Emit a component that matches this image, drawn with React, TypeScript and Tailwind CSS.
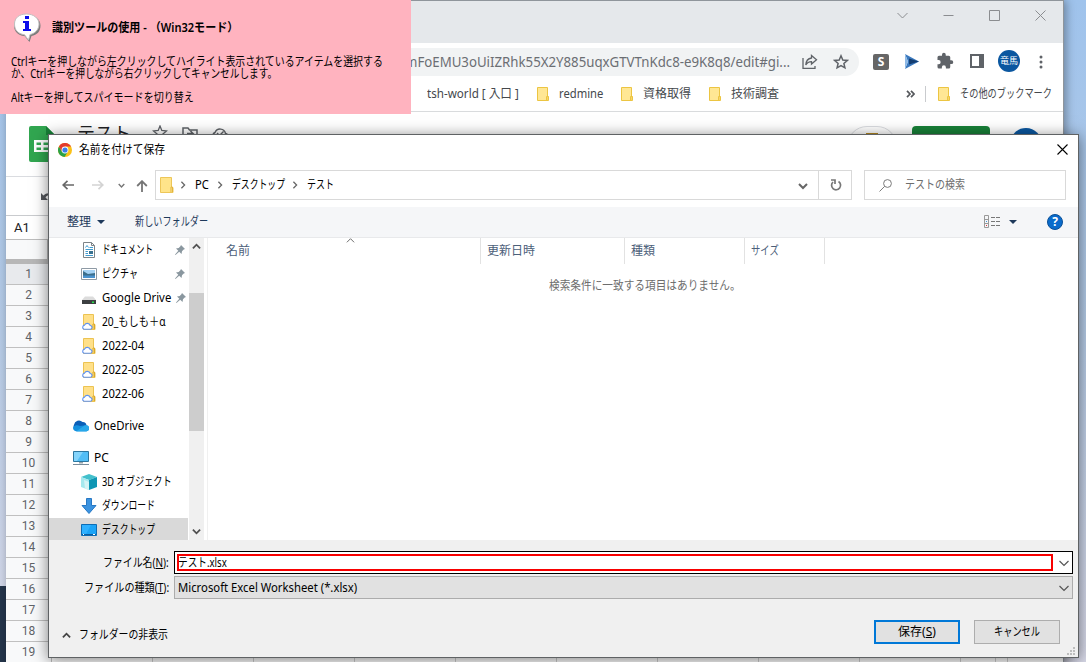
import React, { useLayoutEffect, useRef, useState } from 'react';

const ROWS = Array.from({ length: 19 }, (_, i) => i + 1);
const SHEET_COLUMNS = [101, 101, 101, 101, 101, 101, 101, 101, 101, 35, 12];

const Label: React.FC<{ w: number; className?: string; children: React.ReactNode }> = ({ w, className = '', children }) => {
  const ref = useRef<HTMLSpanElement>(null);
  const [scale, setScale] = useState(1);

  useLayoutEffect(() => {
    if (ref.current) setScale(w / ref.current.offsetWidth);
  }, [w]);

  return (
    <span className={`block shrink-0 whitespace-nowrap ${className}`} style={{ width: w }}>
      <span ref={ref} className="inline-block origin-left" style={{ transform: `scaleX(${scale})` }}>{children}</span>
    </span>
  );
};

const Chevron: React.FC<{ className: string; d?: string; sw?: number }> = ({ className, d = 'M1 3l4 4 4-4', sw = 1.5 }) => (
  <svg viewBox="0 0 10 10" className={`shrink-0 ${className}`} fill="none" stroke="currentColor" strokeWidth={sw}><path d={d} /></svg>
);

const BookmarkFolder: React.FC = () => (
  <svg viewBox="0 0 12 14" className="w-3 h-3.5 shrink-0">
    <path d="M.5.5h10v9h1v4H.5z" fill="#ffe794" stroke="#ecc542" />
    <path d="M9.500 13V9.500h1.500V13" fill="#ffe794" stroke="#ecc542" />
  </svg>
);

const FolderIcon: React.FC = () => (
  <svg viewBox="0 0 14 16" className="w-3.5 h-4 shrink-0">
    <path d="M.5.500h11v10h1.500v5H.5z" fill="#ffe48a" stroke="#edc658" />
    <path d="M11 15v-5h1.500v5" fill="#ffe9a2" stroke="#e3b53c" />
  </svg>
);

const CloudFolder: React.FC = () => (
  <svg viewBox="0 0 16 16" className="w-4 h-4 shrink-0">
    <path d="M2.500.5h10v10h1.500v5H2.500z" fill="#ffe089" stroke="#ecc352" />
    <path d="M12 15v-5h1.500v5" fill="#ffe9a2" stroke="#dca928" />
    <path d="M3 15.300h6a1.900 1.900 0 0 0 .2-3.800 3 3 0 0 0-5.600-.4A2.200 2.200 0 0 0 3 15.300z" fill="#fff" stroke="#5f92ef" strokeWidth="1.100" />
  </svg>
);

const DocumentIcon = () => (
  <svg viewBox="0 0 16 16" className="w-4 h-4 shrink-0">
    <path d="M2.500.5h8l3 3v12h-11z" fill="#fff" stroke="#7d8488" />
    <path d="M10.500.5v3h3" fill="none" stroke="#7d8488" />
    <path d="M4.500 5.500l1.500-2 1.500 2M8.500 5.500H12M4.500 7.500H12M4.500 9.500h2.500M4.500 11.500h2.500M4.500 13.500H12" fill="none" stroke="#3f9bd0" />
    <path d="M8 9h4v3H8z" fill="#39718f" />
  </svg>
);

const PictureIcon = () => (
  <svg viewBox="0 0 16 16" className="w-4 h-4 shrink-0">
    <path d="M.5 2.500h15v11H.5z" fill="#fff" stroke="#8e9aa5" />
    <path d="M2 4h12v8H2z" fill="#a4d2f5" />
    <path d="M2 5l5 3 7-1v3H2z" fill="#3c6f8c" />
    <path d="M2 9.500h12V12H2z" fill="#4a93cf" />
  </svg>
);

const DriveIcon = () => (
  <svg viewBox="0 0 16 16" className="w-4 h-4 shrink-0">
    <path d="M4 6.500h8L15 10H1z" fill="#dcdcdc" />
    <path d="M1 10h14v4H1z" fill="#3c3f41" />
    <path d="M11 11.500h2V13h-2z" fill="#28e04a" />
  </svg>
);

const OneDriveIcon = () => (
  <svg viewBox="0 0 16 16" className="w-4 h-4 shrink-0">
    <path d="M4 12.500A4 4 0 0 1 1 6.700 5 5 0 0 1 9.500 4a3.800 3.800 0 0 1 4 3.500z" fill="#0a5fb8" />
    <path d="M3 13.200a3 3 0 0 1-2.700-4.100C2 6.500 5 7 7 8l6-.8a3 3 0 0 1 .300 6z" fill="#1490df" />
    <path d="M3 13.400L10.500 8.200a3 3 0 0 1 3-.9 3.100 3.100 0 0 1 0 6.100z" fill="#28a8ea" />
  </svg>
);

const PcIcon = () => (
  <svg viewBox="0 0 16 16" className="w-4 h-4 shrink-0">
    <path d="M.5 1.500h15v10H.5z" fill="#52bdf5" stroke="#2c769f" />
    <path d="M1 2h9L4 11H1z" fill="#84d4fb" />
    <path d="M6 12h4v1.500H6z" fill="#97a4ac" />
    <path d="M0 14.500h16" stroke="#788c9b" />
  </svg>
);

const CubeIcon = () => (
  <svg viewBox="0 0 16 16" className="w-4 h-4 shrink-0">
    <path d="M8 0l8 3-8 3-8-3z" fill="#43c0cc" />
    <path d="M0 3l8 3v10l-8-3z" fill="#a5e8ee" />
    <path d="M16 3L8 6v10l8-3z" fill="#0e96b4" />
    <path d="M3 6l5 2v8l-4-1.500z" fill="#d4f3f5" />
  </svg>
);

const DownloadIcon = () => (
  <svg viewBox="0 0 16 16" className="w-4 h-4 shrink-0">
    <path d="M5.500.5h5v7h4.500L8 15.500 1 7.500h4.500z" fill="#3b93e0" stroke="#2778c4" />
  </svg>
);

const DesktopIcon = () => (
  <svg viewBox="0 0 16 16" className="w-4 h-4 shrink-0">
    <path d="M.5 2.500h15v11H.5z" fill="#1ba4f7" stroke="#0d6db5" />
    <path d="M1 3h9L5 12H1z" fill="#2fb1ff" />
    <path d="M1 12.500h14" stroke="#0d5c9e" />
    <path d="M2 12.500h1M12 12.500h2" stroke="#fff" />
  </svg>
);

const PinIcon = () => (
  <svg viewBox="0 0 10 10" className="w-2.5 h-2.5" fill="#8a979f">
    <path d="M6 0l4 4-1.300.6L7 6.300 6.500 9 4.200 6.700 0.500 10 0 9.500 3.300 5.800 1 3.500l2.700-.5L5.400 1.300z" />
  </svg>
);

const ChromeIcon = () => (
  <svg viewBox="0 0 14 14" className="w-3.5 h-3.5">
    <circle cx="7" cy="7" r="7" fill="#fbc116" />
    <path d="M7 7L1 3.400A7 7 0 0 1 13.100 3.500H7z" fill="#e33b2e" />
    <path d="M1 3.400A7 7 0 0 0 6.500 14L9.800 8.800 4 8.800z" fill="#2aa147" />
    <path d="M1 3.400L4.300 9 7 4V2z" fill="#e33b2e" />
    <circle cx="7" cy="7" r="3.400" fill="#fff" />
    <circle cx="7" cy="7" r="2.600" fill="#3d7ee8" />
  </svg>
);

type NavItem = { label: string; w: number; icon: React.FC; pin?: boolean; root?: boolean; active?: boolean; gap?: boolean };

const NAV_ITEMS: NavItem[] = [
  { label: 'ドキュメント', w: 51, icon: DocumentIcon, pin: true },
  { label: 'ピクチャ', w: 36, icon: PictureIcon, pin: true },
  { label: 'Google Drive', w: 69, icon: DriveIcon, pin: true },
  { label: '20_もしも＋α', w: 64, icon: CloudFolder },
  { label: '2022-04', w: 42, icon: CloudFolder },
  { label: '2022-05', w: 42, icon: CloudFolder },
  { label: '2022-06', w: 42, icon: CloudFolder },
  { label: 'OneDrive', w: 50, icon: OneDriveIcon, root: true, gap: true },
  { label: 'PC', w: 15, icon: PcIcon, root: true, gap: true },
  { label: '3D オブジェクト', w: 70, icon: CubeIcon },
  { label: 'ダウンロード', w: 53, icon: DownloadIcon },
  { label: 'デスクトップ', w: 53, icon: DesktopIcon, active: true },
];

const COLUMNS = [
  { label: '名前', w: 24, box: 'w-[273px] pl-[18px]' },
  { label: '更新日時', w: 48, box: 'w-36 pl-1.5' },
  { label: '種類', w: 24, box: 'w-[120px] pl-1.5' },
  { label: 'サイズ', w: 28, box: 'w-20 pl-1.5' },
];

const BrowserWindow: React.FC = () => (
  <div className="absolute left-1.5 top-0 w-[1058px] h-[670px] bg-white border-t border-r border-[#8f959b] shadow-[2px_0_9px_rgba(0,0,0,0.35)] flex flex-col overflow-hidden">
    <div className="h-[42px] shrink-0 bg-[#e5e8eb] flex justify-end gap-[35px] pt-[9px] pr-[17px] text-[#8b8d90]">
      <svg viewBox="0 0 11 11" className="w-[11px] h-[11px]" fill="none" stroke="currentColor"><path d="M.5 3l5 5 5-5" /></svg>
      <svg viewBox="0 0 11 11" className="w-[11px] h-[11px]" fill="none" stroke="currentColor"><path d="M.5 5.500h10" /></svg>
      <svg viewBox="0 0 11 11" className="w-[11px] h-[11px]" fill="none" stroke="currentColor"><path d="M.5.5h10v10H.5z" /></svg>
      <svg viewBox="0 0 11 11" className="w-[11px] h-[11px]" fill="none" stroke="currentColor"><path d="M.5.5l10 10M10.500.5l-10 10" /></svg>
    </div>

    <div className="h-9 shrink-0 flex items-center pt-0.5 pr-3.5 text-[#5f6368]">
      <div className="w-[853px] h-7 rounded-r-full bg-[#f1f3f4] flex items-center pl-[399px]">
        <Label w={385} className="text-sm text-[#6b6e73]">mFoEMU3oUiIZRhk55X2Y885uqxGTVTnKdc8-e9K8q8/edit#gi...</Label>
        <svg viewBox="0 0 16 16" className="ml-3 w-4 h-4" fill="none" stroke="currentColor" strokeWidth="1.300">
          <path d="M1 4v10.300h12V12M9.500 1.500l5 4.300-5 4.200V7.600C6.500 7.600 5 8.800 3.800 11c.2-4 2.500-6.500 5.700-7z" />
        </svg>
        <svg viewBox="0 0 16 16" className="ml-[15px] w-4 h-4" fill="none" stroke="currentColor" strokeWidth="1.500">
          <path d="M8 1.800l1.800 4.200 4.500.4-3.400 3 1 4.400L8 11.500l-3.900 2.300 1-4.400-3.400-3 4.500-.4z" />
        </svg>
      </div>
      <div className="ml-3.5 w-4 h-4 rounded-[2px] bg-[#666] text-white text-xs font-bold leading-4 text-center">S</div>
      <svg viewBox="0 0 14 15" className="ml-4 -mt-0.5 w-3.5 h-[15px]">
        <path d="M0 0l14 7.500L0 15l3-7.500z" fill="#3a78bd" />
        <path d="M4 4.500l10 3-10 3z" fill="#143e72" />
        <path d="M0 0l3 7.500L0 15z" fill="#8db9e6" />
      </svg>
      <svg viewBox="0 0 24 24" className="ml-[17px] w-[18px] h-[18px] -mt-0.5" fill="currentColor">
        <path d="M20.500 11H19V7a2 2 0 0 0-2-2h-4V3.500a2.500 2.500 0 0 0-5 0V5H4a2 2 0 0 0-2 2v3.800h1.500a2.700 2.700 0 0 1 0 5.400H2V20a2 2 0 0 0 2 2h3.800v-1.500a2.700 2.700 0 0 1 5.400 0V22H17a2 2 0 0 0 2-2v-4h1.500a2.500 2.500 0 0 0 0-5z" />
      </svg>
      <svg viewBox="0 0 14 14" className="ml-4 -mt-0.5 w-3.5 h-3.5"><path d="M1 1h12v12H1z" fill="#fff" stroke="currentColor" strokeWidth="2" /><path d="M9 1h5v12H9z" fill="currentColor" /></svg>
      <div className="ml-3.5 w-[22px] h-[22px] -mt-0.5 rounded-full bg-[#0b57a0] flex items-center justify-center text-[9px] text-white"><Label w={18}>竜馬</Label></div>
      <svg viewBox="0 0 4 14" className="ml-[19px] w-1 h-3.5" fill="currentColor"><circle cx="2" cy="2" r="1.500" /><circle cx="2" cy="7" r="1.500" /><circle cx="2" cy="12" r="1.500" /></svg>
    </div>

    <div className="h-[33px] shrink-0 border-b border-[#d9dbdd] flex items-center pb-0.5 pl-[421px] text-xs text-[#45484c]">
      <Label w={92}>tsh-world [ 入口 ]</Label>
      <div className="ml-[18px] flex items-center gap-2.5"><BookmarkFolder /><Label w={44}>redmine</Label></div>
      <div className="ml-[18px] flex items-center gap-2.5"><BookmarkFolder /><Label w={48}>資格取得</Label></div>
      <div className="ml-[18px] flex items-center gap-2.5"><BookmarkFolder /><Label w={48}>技術調査</Label></div>
      <svg viewBox="0 0 9 8" className="ml-[127px] w-[9px] h-2" fill="none" stroke="#55585c" strokeWidth="1.700"><path d="M1 .8l3 3.200-3 3.200M5 .8l3 3.200-3 3.200" /></svg>
      <div className="ml-2.5 w-px h-4 bg-[#c9cbce]" />
      <div className="ml-3 flex items-center gap-2.5"><BookmarkFolder /><Label w={92}>その他のブックマーク</Label></div>
    </div>

    <div className="h-[65px] shrink-0 border-b border-[#dadce0] flex items-start pt-3.5 pl-[23px] text-[#5f6368]">
      <svg viewBox="0 0 26 36" className="w-[26px] h-9">
        <path d="M2 0h15l9 9v27H2a2 2 0 0 1-2-2V2a2 2 0 0 1 2-2z" fill="#31a650" />
        <path d="M17 0l9 9h-9z" fill="#188038" />
        <path d="M5 14h21v12H5zM7.500 16.500v2.500H12v-2.500zM14.500 16.500v2.500H24v-2.500zM7.500 21.500V24H12v-2.500zM14.500 21.500V24H24v-2.500z" fill="#fff" fillRule="evenodd" />
      </svg>
      <Label w={54} className="ml-[22px] -mt-[7px] text-lg text-[#202124]">テスト</Label>
      <svg viewBox="0 0 16 16" className="ml-[21px] -mt-px w-4 h-4" fill="none" stroke="currentColor" strokeWidth="1.300"><path d="M8 1l1.800 4.500 4.700.4-3.600 3L12 14l-4-2.500L4 14l1.100-5.100-3.600-3 4.700-.4z" /></svg>
      <svg viewBox="0 0 16 16" className="ml-3.5 w-4 h-4" fill="none" stroke="currentColor" strokeWidth="1.500"><path d="M1 2h5l1.500 2H15v10H1zM5 7.500h6M8.500 5l3 3-3 3" /></svg>
      <svg viewBox="0 0 18 16" className="ml-[13px] w-[18px] h-4" fill="none" stroke="currentColor" strokeWidth="1.400"><path d="M5 14a4 4 0 0 1-1-7.500 5.500 5.500 0 0 1 10.500 1A3.300 3.300 0 0 1 14 14zM6 7l2.500 2.500L12.500 5.500" /></svg>
      <div className="ml-[575px] mt-2 w-[18px] h-4 bg-[#3c4043]" />
      <div className="ml-[25px] w-[50px] h-10 rounded-full border border-[#dadce0] flex justify-center pt-1.5"><div className="w-3 h-4 bg-[#b58822]" /></div>
      <div className="ml-[15px] w-[78px] h-9 rounded bg-[#188038]" />
      <div className="ml-[20px] mt-0.5 w-8 h-8 rounded-full bg-[#0b57a0]" />
    </div>
    <div className="h-[39px] shrink-0 border-b border-[#c9cbce] pl-[35px] pt-[15px]">
      <svg viewBox="0 0 12 10" className="w-3 h-2.5" fill="#55585c"><path d="M0 1l2.500 2.500C6 0 10 1 12 4l-1.500 1C8 3 6 3 4.500 5.500L7 8H0z" /></svg>
    </div>
    <div className="h-6 shrink-0 border-b border-[#bdbdbd] pl-2 pt-0.5 text-[13px] text-[#202124] font-[Roboto]">A1</div>

    <div className="flex">
      <div className="w-[46px] shrink-0 border-r border-[#c0c0c0] bg-[#f8f9fa]">
        <div className="h-6 border-b-[5px] border-r-4 border-[#b7b7b7]" />
        {ROWS.map((n) => (
          <div key={n} className={`h-[21px] border-b border-[#c0c0c0] text-center text-xs leading-5 font-[Roboto] text-[#5f6368] ${n === 1 ? 'bg-[#e8eaed]' : ''}`}>{n}</div>
        ))}
      </div>
      {SHEET_COLUMNS.map((width, i) => (
        <div key={i} className="shrink-0 border-r border-[#d0d0d0]" style={{ width }} />
      ))}
    </div>
  </div>
);

const NavPane: React.FC = () => (
  <div className="w-[140px] shrink-0 h-full overflow-hidden">
    {NAV_ITEMS.map(({ label, w, icon: Icon, pin, root, active, gap }) => (
      <div key={label} className={`w-[139px] h-6 flex items-center gap-[5px] ${root ? 'pl-6' : 'pl-8'} ${gap ? 'mt-2' : ''} ${active ? 'bg-[#d9d9d9]' : ''}`}>
        <Icon />
        <Label w={w}>{label}</Label>
        {pin && <div className="ml-auto mr-[3px]"><PinIcon /></div>}
      </div>
    ))}
  </div>
);

const SaveDialog: React.FC = () => (
  <div className="absolute left-12 top-[134px] w-[1031px] h-[524px] border border-[#5f6264] bg-white shadow-[0_2px_14px_rgba(0,0,0,0.5)] flex flex-col text-xs text-black">
    <div className="h-[29px] shrink-0 flex items-center pl-[9px] pr-2.5">
      <ChromeIcon />
      <Label w={86} className="ml-[7px]">名前を付けて保存</Label>
      <svg viewBox="0 0 11 11" className="ml-auto -mt-px w-[11px] h-[11px]" fill="none" stroke="#000" strokeWidth="1.100"><path d="M.5.5l10 10M10.500.5l-10 10" /></svg>
    </div>

    <div className="h-[43px] shrink-0 flex items-start pt-1.5 pl-[13px] text-[#757575]">
      <div className="w-[93px] h-[30px] flex items-center">
        <svg viewBox="0 0 12 10" className="w-3 h-2.5" fill="none" stroke="#686868" strokeWidth="1.700"><path d="M12 5H1M5.500.8L1.200 5l4.300 4.200" /></svg>
        <svg viewBox="0 0 12 10" className="ml-[18px] w-3 h-2.5" fill="none" stroke="#d3d3d3" strokeWidth="1.700"><path d="M0 5h11M6.500.8L10.800 5 6.500 9.200" /></svg>
        <Chevron className="ml-[14px] w-[7px] h-[7px]" sw={2} />
        <svg viewBox="0 0 12 12" className="ml-[11px] mt-0.5 w-3 h-3" fill="none" stroke="#757575" strokeWidth="1.800"><path d="M6 12V1.500M1.200 6L6 1.200 10.800 6" /></svg>
      </div>
      <div className="w-[697px] h-[30px] border border-[#d9d9d9] flex items-center pl-1 text-black">
        <FolderIcon />
        <Chevron className="ml-[5px] w-2 h-2 text-[#666]" d="M3 1l4 4-4 4" sw={1.600} />
        <Label w={14} className="ml-2">PC</Label>
        <Chevron className="ml-[7px] w-2 h-2 text-[#666]" d="M3 1l4 4-4 4" sw={1.600} />
        <Label w={53} className="ml-2">デスクトップ</Label>
        <Chevron className="ml-1.5 w-2 h-2 text-[#666]" d="M3 1l4 4-4 4" sw={1.600} />
        <Label w={27} className="ml-2">テスト</Label>
        <div className="ml-auto h-full w-8 flex items-center justify-center border-r border-[#d9d9d9]">
          <Chevron className="mt-0.5 w-2.5 h-2.5 text-[#666]" sw={2} />
        </div>
        <div className="w-8 flex justify-center pl-0.5">
          <svg viewBox="0 0 12 12" className="w-3 h-3" fill="none" stroke="#777" strokeWidth="1.700"><path d="M8.500 2.500A4.500 4.500 0 1 1 3 3M1 1h4v4" /></svg>
        </div>
      </div>
      <div className="ml-3 w-[202px] h-[30px] border border-[#d9d9d9] flex items-center pl-3.5">
        <svg viewBox="0 0 13 13" className="w-[13px] h-[13px]" fill="none" stroke="#7b7b7b"><circle cx="8.500" cy="4.500" r="3.900" /><path d="M5.700 7.300L.5 12.500" /></svg>
        <Label w={60} className="ml-[13px] text-[#6d6d6d]">テストの検索</Label>
      </div>
    </div>

    <div className="h-[31px] shrink-0 bg-[#f5f6f8] border-b border-[#e8e9eb] flex items-center pl-[18px] pr-[15px] text-[#1e395b]">
      <Label w={24}>整理</Label>
      <div className="ml-1.5 border-x-4 border-t-4 border-x-transparent border-t-[#1e395b]" />
      <Label w={73} className="ml-[30px]">新しいフォルダー</Label>
      <svg viewBox="0 0 17 14" className="ml-auto w-[17px] h-3.5" fill="none" stroke="#777">
        <path d="M.5.5h4v12h-4zM1 4.500h3M1 8.500h3" stroke="#999" />
        <path d="M7 2.500h4M12 2.500h4M7 6.500h4M12 6.500h4M7 10.500h4M12 10.500h4" />
        <path d="M2 6.500h1" stroke="#4296dd" /><path d="M2 10.500h1" stroke="#d33" />
      </svg>
      <div className="ml-2 border-x-4 border-t-4 border-x-transparent border-t-[#1e395b]" />
      <div className="ml-[30px] w-4 h-4 rounded-full bg-[#0a6bcb] border border-[#0a4f97] text-white font-bold text-xs leading-[14px] text-center">?</div>
    </div>

    <div className="h-[302px] shrink-0 flex">
      <NavPane />
      <div className="w-[15px] shrink-0 bg-[#f0f0f0] flex flex-col items-center text-[#505050]">
        <div className="h-[55px] pt-1"><Chevron className="w-[9px] h-[9px]" d="M1 7l4-4 4 4" sw={2} /></div>
        <div className="w-full h-[138px] bg-[#cdcdcd]" />
        <Chevron className="mt-auto mb-1 w-[9px] h-[9px]" sw={2} />
      </div>
      <div className="ml-[3px] flex-1 border-l border-[#f0f0f0] relative">
        <div className="h-[26px] flex text-[#4c607a]">
          {COLUMNS.map((c) => (
            <div key={c.label} className={`${c.box} h-full flex items-center border-r border-[#e2e2e2]`}>
              <Label w={c.w}>{c.label}</Label>
            </div>
          ))}
        </div>
        {/* sort indicator sits over the name column */}
        <Chevron className="absolute left-[138px] -top-0.5 w-[9px] h-[9px] text-[#6b6b6b]" d="M1 7l4-4 4 4" sw={1.100} />
        <div className="flex pl-[341px] pt-3.5 text-[#6d6d6d]"><Label w={192}>検索条件に一致する項目はありません。</Label></div>
      </div>
    </div>

    <div className="flex-1 bg-[#f0f0f0] relative">
      <div className="flex items-center pt-[11px] pl-[54px]">
        <Label w={66}>ファイル名(<u>N</u>):</Label>
        <div className="ml-[5px] w-[899px] h-[23px] border border-black bg-white flex items-center pl-0.5 pr-[3px]">
          <div className="w-[876px] h-[17px] border-2 border-[#f80000] flex items-center"><Label w={49} className="-ml-px">テスト.xlsx</Label></div>
          <Chevron className="ml-auto w-2.5 h-2.5 text-[#555]" d="M.5 3L5 7.500 9.500 3" sw={1.200} />
        </div>
      </div>
      <div className="flex items-center pt-0.5 pl-[35px]">
        <Label w={85}>ファイルの種類(<u>T</u>):</Label>
        <div className="ml-[5px] w-[899px] h-[23px] border border-[#acacac] bg-[#e1e1e1] flex items-center pl-[3px] pr-[3px]">
          <Label w={179}>Microsoft Excel Worksheet (*.xlsx)</Label>
          <Chevron className="ml-auto w-2.5 h-2.5 text-[#555]" d="M.5 3L5 7.500 9.500 3" sw={1.200} />
        </div>
      </div>
      <div className="flex items-center pt-[21px] pl-[13px]">
        <Chevron className="mt-1.5 w-[9px] h-[9px] text-[#444]" d="M1 7l4-4 4 4" sw={2} />
        <Label w={89} className="ml-2 mt-1.5">フォルダーの非表示</Label>
        <button className="ml-auto w-[86px] h-6 border-2 border-[#0078d7] bg-[#e1e1e1] flex items-center justify-center"><Label w={38}>保存(<u>S</u>)</Label></button>
        <button className="ml-3.5 mr-[18px] w-[86px] h-6 border border-[#adadad] bg-[#e1e1e1] flex items-center justify-center"><Label w={46}>キャンセル</Label></button>
      </div>
      <svg viewBox="0 0 8 8" className="absolute right-[3px] bottom-0.5 w-2 h-2" fill="#bdbdbd"><path d="M6 0h2v2H6zM3 3h2v2H3zM6 3h2v2H6zM0 6h2v2H0zM3 6h2v2H3zM6 6h2v2H6z" /></svg>
    </div>
  </div>
);

const SpyPanel: React.FC = () => (
  <div className="absolute left-0 top-0 w-[411px] h-[114px] bg-[#ffb3bf] pl-[11px] pt-3 text-xs text-black">
    <div className="flex items-center">
      <svg viewBox="0 0 32 32" className="w-8 h-8">
        <path d="M16 3c8 0 13.500 4.500 13.500 10.500S26 23 20.500 24L18.500 30l-5-6C7 23.500 3 19.500 3 13.500S8.500 3 16 3z" fill="#7c7c7c" />
        <path d="M15.500 2C23 2 28 6.500 28 12s-4 9.500-9 10.500L17.500 28l-4-5.300C7 22 3.500 18 3.500 12S8 2 15.500 2z" fill="#fff" stroke="#c4bfc0" />
        <path d="M14 4h4v3h-4zM12 9h6v8h2v2h-8v-2h2v-6h-2z" fill="#0b0bea" />
      </svg>
      <Label w={186} className="ml-[9px] font-semibold">識別ツールの使用 - （Win32モード）</Label>
    </div>
    <div className="mt-3 leading-[12px]">
      <Label w={372}>Ctrlキーを押しながら左クリックしてハイライト表示されているアイテムを選択する</Label>
      <Label w={266}>か、Ctrlキーを押しながら右クリックしてキャンセルします。</Label>
    </div>
    <Label w={183} className="mt-[11px] leading-[14px]">Altキーを押してスパイモードを切り替え</Label>
  </div>
);

const App: React.FC = () => (
  <div className="relative w-[1086px] h-[662px] overflow-hidden bg-linear-to-b from-[#9fc3ec] via-[#b4cae5] to-[#d8d9e8] font-['Noto_Sans','Noto_Sans_CJK_JP',sans-serif]">
    <div className="absolute left-0 top-[586px] w-1.5 h-[76px] bg-[#24354b]" />
    <BrowserWindow />
    <SaveDialog />
    <SpyPanel />
  </div>
);

export default App;
